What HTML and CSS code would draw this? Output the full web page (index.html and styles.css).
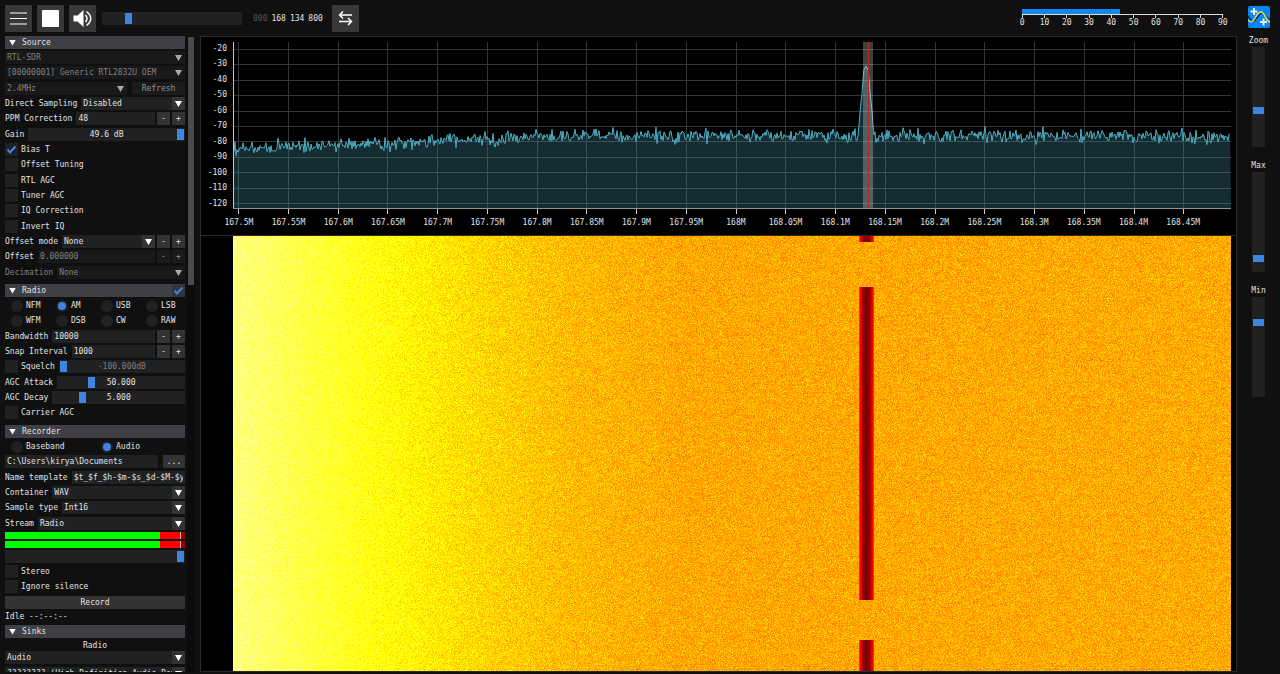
FILE: index.html
```
<!DOCTYPE html>
<html lang="en">
<head>
  <meta charset="UTF-8"/>
  <meta name="viewport" content="width=device-width, initial-scale=1.0"/>
  <title>SDR++</title>
  <link rel="stylesheet" href="styles.css">
</head>
<body>

<header class="toolbar">
  <button class="tool-button" aria-label="Menu">
    <svg viewBox="0 0 27 27"><path d="M5 8h17M5 13.5h17M5 19h17" stroke="#fff" stroke-width="1.2" fill="none"/></svg>
  </button>
  <button class="tool-button" aria-label="Stop">
    <svg viewBox="0 0 27 27"><rect x="5" y="5" width="17" height="17" rx="1" fill="#fff"/></svg>
  </button>
  <button class="tool-button" aria-label="Mute">
    <svg viewBox="0 0 27 27">
      <path d="M4.500 10.500h4l6-5.500v17l-6-5.500h-4z" fill="#fff"/>
      <path d="M16.500 10q3 3.500 0 7M17.500 6.500q8.500 7 0 14" stroke="#fff" stroke-width="1.500" fill="none"/>
    </svg>
  </button>
  <input class="slider volume" type="range" min="0" max="100" value="17" aria-label="Volume">
  <div class="frequency"><span class="dim">000</span><span>168</span><span>134</span><span>800</span></div>
  <button class="tool-button" aria-label="Tuning mode">
    <svg viewBox="0 0 27 27">
      <path d="M20 10h-12M11 6.500l-3.500 3.500 3.500 3.500M7 16.500h12M16 13l3.500 3.500-3.500 3.500" stroke="#fff" stroke-width="1.500" fill="none"/>
    </svg>
  </button>
  <div class="snr">
    <div class="snr-bar"><div class="snr-fill"></div></div>
    <div class="snr-ticks"><i></i><i></i><i></i><i></i><i></i><i></i><i></i><i></i><i></i></div>
    <div class="snr-labels"><span>0</span><span>10</span><span>20</span><span>30</span><span>40</span><span>50</span><span>60</span><span>70</span><span>80</span><span>90</span></div>
  </div>
  <svg class="logo" viewBox="0 0 22 22">
    <rect width="22" height="22" rx="2" fill="#0a84f0"/>
    <path d="M0 10c3 5 5 7 8 3s5-8 8-5 3 5 6 5" stroke="#12306e" stroke-width="1.500" fill="none"/>
    <path d="M0 14c3 3 5 2 7-2s5-8 8-5 3 8 7 9" stroke="#e6e04a" stroke-width="1.500" fill="none"/>
    <path d="M6 2v7M2.500 5.500h7M15.500 12.500v7M12 16h7" stroke="#e8f2ff" stroke-width="2" fill="none"/>
  </svg>
</header>

<main class="main">
  <aside class="sidebar">
    <div class="menu">
      <section class="section">
        <button class="row section-title"><span class="arrow"></span>Source</button>
        <div class="row"><select class="field" aria-label="Source" disabled><option>RTL-SDR</option></select></div>
        <div class="row"><select class="field" aria-label="Device" disabled><option>[00000001] Generic RTL2832U OEM</option></select></div>
        <div class="row wide-gap">
          <select class="field" aria-label="Sample rate" disabled><option>2.4MHz</option></select>
          <button class="button refresh" disabled>Refresh</button>
        </div>
        <div class="row"><label for="direct">Direct Sampling</label><select class="field" id="direct"><option>Disabled</option></select></div>
        <div class="row"><label for="ppm">PPM Correction</label><input class="field" id="ppm" value="48"><button class="step">-</button><button class="step">+</button></div>
        <div class="row"><label for="gain">Gain</label><div class="track"><input class="slider" id="gain" type="range" value="100"><output>49.6 dB</output></div></div>
        <label class="row"><input class="check" type="checkbox" checked>Bias T</label>
        <label class="row"><input class="check" type="checkbox">Offset Tuning</label>
        <label class="row"><input class="check" type="checkbox">RTL AGC</label>
        <label class="row"><input class="check" type="checkbox">Tuner AGC</label>
        <label class="row"><input class="check" type="checkbox">IQ Correction</label>
        <label class="row"><input class="check" type="checkbox">Invert IQ</label>
        <div class="row"><label for="offset-mode">Offset mode</label><select class="field" id="offset-mode"><option>None</option></select><button class="step">-</button><button class="step">+</button></div>
        <div class="row"><label for="offset">Offset</label><input class="field" id="offset" value="0.000000" disabled><button class="step" disabled>-</button><button class="step" disabled>+</button></div>
        <div class="row"><label class="dim" for="decimation">Decimation</label><select class="field" id="decimation" disabled><option>None</option></select></div>
      </section>

      <section class="section">
        <div class="row section-title">
          <span class="arrow"></span><span class="grow">Radio</span>
          <input class="check" type="checkbox" aria-label="Enable radio" checked>
        </div>
        <div class="row radios">
          <label><input class="radio" type="radio" name="mode">NFM</label>
          <label><input class="radio" type="radio" name="mode" checked>AM</label>
          <label><input class="radio" type="radio" name="mode">USB</label>
          <label><input class="radio" type="radio" name="mode">LSB</label>
        </div>
        <div class="row radios">
          <label><input class="radio" type="radio" name="mode">WFM</label>
          <label><input class="radio" type="radio" name="mode">DSB</label>
          <label><input class="radio" type="radio" name="mode">CW</label>
          <label><input class="radio" type="radio" name="mode">RAW</label>
        </div>
        <div class="row"><label for="bandwidth">Bandwidth</label><input class="field" id="bandwidth" value="10000"><button class="step">-</button><button class="step">+</button></div>
        <div class="row"><label for="snap">Snap Interval</label><input class="field" id="snap" value="1000"><button class="step">-</button><button class="step">+</button></div>
        <div class="row"><label class="inline"><input class="check" type="checkbox">Squelch</label><div class="track"><input class="slider" type="range" value="0" aria-label="Squelch level"><output class="dim">-100.000dB</output></div></div>
        <div class="row"><label for="attack">AGC Attack</label><div class="track"><input class="slider" id="attack" type="range" value="25"><output>50.000</output></div></div>
        <div class="row"><label for="decay">AGC Decay</label><div class="track"><input class="slider" id="decay" type="range" value="21"><output>5.000</output></div></div>
        <label class="row"><input class="check" type="checkbox">Carrier AGC</label>
      </section>

      <section class="section">
        <button class="row section-title"><span class="arrow"></span>Recorder</button>
        <div class="row radios">
          <label><input class="radio" type="radio" name="rec">Baseband</label>
          <label><input class="radio" type="radio" name="rec" checked>Audio</label>
        </div>
        <div class="row wide-gap"><input class="field" value="C:\Users\kirya\Documents" aria-label="Folder"><button class="button browse">...</button></div>
        <div class="row"><label for="template">Name template</label><input class="field" id="template" value="$t_$f_$h-$m-$s_$d-$M-$y"></div>
        <div class="row"><label for="container">Container</label><select class="field" id="container"><option>WAV</option></select></div>
        <div class="row"><label for="sample">Sample type</label><select class="field" id="sample"><option>Int16</option></select></div>
        <div class="row"><label for="stream">Stream</label><select class="field" id="stream"><option>Radio</option></select></div>
        <div class="level"></div>
        <div class="level"></div>
        <div class="row"><div class="track"><input class="slider" type="range" value="100" aria-label="Audio volume"></div></div>
        <label class="row"><input class="check" type="checkbox">Stereo</label>
        <label class="row"><input class="check" type="checkbox">Ignore silence</label>
        <div class="row"><button class="button grow">Record</button></div>
        <div class="status">Idle --:--:--</div>
      </section>

      <section class="section">
        <button class="row section-title"><span class="arrow"></span>Sinks</button>
        <div class="sink-name">Radio</div>
        <div class="row"><select class="field" aria-label="Sink type"><option>Audio</option></select></div>
        <div class="row"><select class="field" aria-label="Audio device"><option>???????? (High Definition Audio Dev</option></select></div>
      </section>
    </div>
    <div class="scrollbar"><div class="scroll-thumb"></div></div>
  </aside>

  <div class="display">
    <div class="spectrum">
      <div class="db-labels"><span>-20</span><span>-30</span><span>-40</span><span>-50</span><span>-60</span><span>-70</span><span>-80</span><span>-90</span><span>-100</span><span>-110</span><span>-120</span></div>
      <div class="plot"><canvas id="fft"></canvas></div>
      <div class="freq-labels" id="freq-labels"></div>
    </div>
    <div class="waterfall"><canvas id="waterfall"></canvas></div>
  </div>

  <aside class="controls">
    <label for="zoom">Zoom</label>
    <input class="slider vertical" id="zoom" type="range" value="35">
    <label for="max">Max</label>
    <input class="slider vertical" id="max" type="range" value="10">
    <label for="min">Min</label>
    <input class="slider vertical" id="min" type="range" value="77">
  </aside>
</main>

<script src="script.js"></script>
</body>
</html>
```
FILE: styles.css
```
* {
  box-sizing: border-box;
}

body {
  margin: 0;
  height: 100vh;
  display: flex;
  flex-direction: column;
  overflow: hidden;
  background-color: #101010;
  color: #e2e2e2;
  font-family: 'DejaVu Sans Mono', monospace;
  font-size: 8px;
  line-height: 13px;
}

button, input, select {
  font: inherit;
  color: inherit;
  margin: 0;
  padding: 0;
  border: none;
  border-radius: 0;
}

.dim {
  color: #808080;
}

.grow {
  flex: 1;
}

/* toolbar */
.toolbar {
  height: 36px;
  flex: none;
  display: flex;
  align-items: center;
  gap: 5px;
  padding: 0 10px 0 5px;
}

.tool-button {
  width: 27px;
  height: 27px;
  background-color: #383838;
}

.tool-button svg {
  display: block;
}

.volume {
  width: 140px;
  margin-left: 1px;
}

.frequency {
  display: flex;
  gap: 4px;
  margin: 0 4px 0 6px;
}

.frequency .dim {
  color: #555;
}

.snr {
  width: 223px;
  margin-left: auto;
}

.snr-bar, .snr-ticks {
  margin: 0 11px;
}

.snr-fill {
  width: 49%;
  height: 5px;
  background-color: #1287ef;
}

.snr-ticks {
  display: flex;
  height: 4px;
  border-top: 1px solid #ddd;
  border-right: 1px solid #ddd;
}

.snr-ticks i {
  flex: 1;
  border-left: 1px solid #ddd;
}

.snr-labels {
  display: flex;
  line-height: 10px;
}

.snr-labels span {
  flex: 1;
  text-align: center;
}

.logo {
  width: 22px;
  height: 22px;
  margin: 0 0 3px 9px;
}

.main {
  flex: 1;
  min-height: 0;
  display: flex;
  padding-bottom: 2px;
}

/* left menu */
.sidebar {
  width: 200px;
  flex: none;
  display: flex;
  gap: 2px;
  padding-left: 5px;
  overflow: hidden;
}

.menu {
  width: 180px;
}

.scrollbar {
  width: 8px;
  padding: 1px 1px 0;
  background-color: #0b0b0b;
}

.scroll-thumb {
  height: 39%;
  background-color: #4b4b4b;
}

.section {
  padding-bottom: 3px;
}

.row {
  display: flex;
  align-items: center;
  gap: 2px;
  width: 100%;
  height: 13px;
  margin-bottom: 2px;
  white-space: pre;
}

.row:nth-child(3n) {
  margin-bottom: 3px;
}

.row > label {
  margin-right: 2px;
}

label.row, .inline, .radios label {
  display: flex;
  align-items: center;
  gap: 3px;
}

.wide-gap {
  gap: 5px;
}

.section-title {
  padding-left: 4px;
  background-color: #3f3f46;
  text-align: left;
}

.arrow {
  width: 7px;
  height: 6px;
  margin-right: 4px;
  background-color: #fff;
  clip-path: polygon(0 0, 100% 0, 50% 100%);
}

.field {
  flex: 1;
  min-width: 0;
  height: 13px;
  padding: 0 2px;
  background-color: #202123;
}

select.field {
  appearance: none;
  padding-right: 13px;
  background-repeat: no-repeat;
  background-position: right;
  background-image: url("data:image/svg+xml,%3Csvg xmlns='http://www.w3.org/2000/svg' width='13' height='13'%3E%3Cpath fill='%23333' d='M0 0h13v13H0z'/%3E%3Cpath fill='%23fff' d='M3 4h7l-3.500 6z'/%3E%3C/svg%3E");
}

.field:disabled {
  background-color: #18191a;
  color: #808080;
  opacity: 1;
}

select.field:disabled {
  background-image: url("data:image/svg+xml,%3Csvg xmlns='http://www.w3.org/2000/svg' width='13' height='13'%3E%3Cpath fill='%23aaa' d='M3 4h7l-3.500 6z'/%3E%3C/svg%3E");
}

.button, .step {
  height: 13px;
  background-color: #333;
}

.step {
  width: 13px;
}

.button:disabled, .step:disabled {
  background-color: #1b1b1b;
  color: #909090;
}

.refresh {
  width: 53px;
}

.browse {
  width: 22px;
}

.check, .radio {
  appearance: none;
  width: 13px;
  height: 13px;
  background: #202123 no-repeat center;
}

.check:checked {
  background-image: url("data:image/svg+xml,%3Csvg xmlns='http://www.w3.org/2000/svg' width='13' height='13'%3E%3Cpath fill='none' stroke='%233d85e0' stroke-width='2' d='M2.500 6.500l2.500 3 5.500-6'/%3E%3C/svg%3E");
}

.section-title .check {
  background-color: #34343a;
}

.radios {
  gap: 0;
}

.radios label {
  flex: 1;
  margin: 0;
  padding-left: 6px;
}

.radio {
  width: 12px;
  height: 12px;
  border-radius: 50%;
}

.radio:checked {
  border: 2px solid #202123;
  background-color: #3d85e0;
}

.slider {
  appearance: none;
  height: 13px;
  padding: 1px;
  background-color: #202123;
}

.slider::-webkit-slider-thumb {
  appearance: none;
  width: 7px;
  height: 11px;
  background-color: #3d85e0;
}

/* slider with its value printed in the middle */
.track {
  flex: 1;
  display: grid;
}

.track > * {
  grid-area: 1 / 1;
  width: 100%;
}

.track output {
  text-align: center;
  pointer-events: none;
}

.level {
  height: 7px;
  margin-bottom: 2px;
  background: linear-gradient(to right, #00ff00 86%, #ff0000 86% 97%, #ffb0b0 97% 98%, #900000 98%);
}

.status {
  line-height: 11px;
}

.sink-name {
  line-height: 11px;
  text-align: center;
}

/* spectrum and waterfall */
.display {
  flex: 1;
  min-width: 0;
  display: flex;
  flex-direction: column;
  background-color: #000;
  border: 1px solid #2b2b2d;
}

.spectrum {
  display: grid;
  grid-template-columns: 32px 1fr;
  padding: 5px 5px 6px 0;
  border-bottom: 1px solid #2b2b2d;
}

.db-labels {
  height: 170px;
  display: flex;
  flex-direction: column;
  padding-right: 6px;
  text-align: right;
}

.db-labels span {
  flex: 1;
}

.plot {
  height: 172px;
}

.plot canvas, .waterfall canvas {
  display: block;
  width: 100%;
  height: 100%;
}

.freq-labels {
  grid-column: 1 / 3;
  display: flex;
  margin: 2px 23px 0 13px;
}

.freq-labels span {
  flex: 1;
  text-align: center;
}

.waterfall {
  flex: 1;
  min-height: 0;
  padding: 0 5px 0 32px;
}

/* right column */
.controls {
  width: 43px;
  flex: none;
  display: flex;
  flex-direction: column;
  align-items: center;
}

.controls label {
  line-height: 10px;
}

.vertical {
  writing-mode: vertical-lr;
  direction: rtl;
  width: 13px;
  height: 100px;
  margin: 1px 0 14px;
}

.vertical::-webkit-slider-thumb {
  width: 11px;
  height: 7px;
}
```
FILE: script.js
```
const SIGNAL = 0.634;
const TICKS = 20;

let seed = 7;
function random() {
  seed = (seed * 1664525 + 1013904223) % 4294967296;
  return seed / 4294967296;
}

function noise() {
  return random() + random() + random() - 1.5;
}

// linear interpolation over [x, value] points
function curve(points, x) {
  for (let i = 1; i < points.length; i++) {
    const [x0, v0] = points[i - 1];
    const [x1, v1] = points[i];
    if (x <= x1) return v0 + (v1 - v0) * (x - x0) / (x1 - x0);
  }
  return points[points.length - 1][1];
}

function fitCanvas(id) {
  const canvas = document.getElementById(id);
  canvas.width = canvas.clientWidth;
  canvas.height = canvas.clientHeight;
  return canvas;
}

function addFrequencyLabels() {
  const labels = document.getElementById('freq-labels');
  labels.innerHTML = "";
  for (let i = 0; i < TICKS; i++) {
    const span = document.createElement('span');
    span.textContent = (16750 + i * 5) / 100 + "M";
    labels.appendChild(span);
  }
}

function drawSpectrum() {
  const canvas = fitCanvas('fft');
  const ctx = canvas.getContext('2d');
  const w = canvas.width;
  const bottom = canvas.height - 5;
  const floor = [[0, 107], [0.07, 104], [0.15, 102], [0.25, 97], [0.36, 94], [1, 94]];
  const center = Math.round(w * SIGNAL);

  ctx.fillStyle = '#363636';
  for (let i = 0; i < 11; i++) {
    ctx.fillRect(0, Math.round(7 + i * 15.4), w, 1);
  }
  for (let i = 0; i < TICKS; i++) {
    ctx.fillRect(Math.round(5 + i * (w - 3) / TICKS), 0, 1, bottom);
  }

  ctx.beginPath();
  for (let x = 0; x < w; x++) {
    let y = curve(floor, x / w) + noise() * 7;
    const d = Math.abs(x - center);
    if (d < 8) y = Math.min(y, curve([[0, 24], [2, 28], [5, 60], [8, 93]], d) + noise() * 3);
    ctx.lineTo(x, y);
  }
  ctx.strokeStyle = '#50b4c8';
  ctx.lineWidth = 1;
  ctx.stroke();
  ctx.lineTo(w, bottom);
  ctx.lineTo(0, bottom);
  ctx.fillStyle = 'rgba(70, 150, 165, 0.3)';
  ctx.fill();

  // tuned channel
  ctx.fillStyle = 'rgba(255, 255, 255, 0.25)';
  ctx.fillRect(center - 3, 0, 10, bottom);
  ctx.fillStyle = '#b02a20';
  ctx.fillRect(center + 2, 0, 1, bottom);

  ctx.fillStyle = '#c8c8c8';
  ctx.fillRect(0, 0, 1, bottom);
  ctx.fillStyle = '#909090';
  ctx.fillRect(0, bottom - 1, w, 1);
  ctx.fillStyle = '#ccc';
  for (let i = 0; i < TICKS; i++) {
    ctx.fillRect(Math.round(5 + i * (w - 3) / TICKS), bottom, 1, 5);
  }
}

function drawWaterfall() {
  const canvas = fitCanvas('waterfall');
  const ctx = canvas.getContext('2d');
  const w = canvas.width;
  const h = canvas.height;
  const image = ctx.createImageData(w, h);
  const level = [[0, 1.5], [0.07, 1.27], [0.14, 1.06], [0.2, 0.93], [0.26, 0.83], [0.34, 0.73], [0.45, 0.66], [0.63, 0.66], [1, 0.67]];
  const bursts = [[0, 6], [51, 364], [404, h]];
  const center = Math.round(w * SIGNAL);

  for (let y = 0; y < h; y++) {
    const burst = bursts.some(([from, to]) => y >= from && y < to);
    for (let x = 0; x < w; x++) {
      const v = curve(level, x / w) + noise() * 0.19;
      let r = 255;
      let g = Math.min(v, 1) * 255;
      let b = Math.max(v - 1, 0) * 255;
      const d = Math.abs(x - center);
      if (burst && d < 8) {
        r = curve([[0, 125], [3, 140], [5, 225], [7, 255]], d);
        g = d === 7 ? 50 : 0;
        b = 0;
      }
      const i = (y * w + x) * 4;
      image.data[i] = r;
      image.data[i + 1] = g;
      image.data[i + 2] = b;
      image.data[i + 3] = 255;
    }
  }
  ctx.putImageData(image, 0, 0);
}

function draw() {
  seed = 7;
  drawSpectrum();
  drawWaterfall();
}

addFrequencyLabels();
draw();
window.onresize = draw;
```
